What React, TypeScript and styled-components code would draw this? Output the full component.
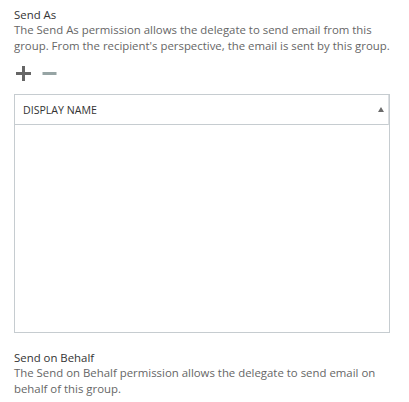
import styled, { createGlobalStyle } from 'styled-components'

const GlobalStyle = createGlobalStyle`
    body {
        margin: 0;
        background: #ffffff;
        font-family: "Open Sans", "Noto Sans", sans-serif;
    }
`

const Page = styled.div`
    padding: 7px 19px 0 14px;
    width: 409px;
    box-sizing: border-box;
`

const Section = styled.div`
    margin-bottom: 17px;
`

const Title = styled.div`
    font-size: 11.4px;
    line-height: 15px;
    color: #333333;
`

const Description = styled.div`
    font-size: 11.4px;
    line-height: 16px;
    color: #666666;
`

const Toolbar = styled.div`
    display: flex;
    align-items: center;
    gap: 11px;
    height: 15px;
    margin: 12px 0 13px 2px;
`

const ToolButton = styled.button<{ $disabled?: boolean }>`
    display: flex;
    align-items: center;
    justify-content: center;
    padding: 0;
    border: none;
    background: none;
    width: 15px;
    height: 15px;
    color: ${p => (p.$disabled ? '#96a4a4' : '#666666')};
    cursor: ${p => (p.$disabled ? 'default' : 'pointer')};
`

const Grid = styled.div`
    border: 1px solid #c6ccd0;
    height: 239px;
    box-sizing: border-box;
`

const HeaderRow = styled.div`
    display: flex;
    align-items: center;
    justify-content: space-between;
    height: 30px;
    box-sizing: border-box;
    padding: 0 4px 0 8px;
    border-bottom: 1px solid #c6ccd0;
    border-right: 1px solid #dcdfe2;
`

const HeaderCell = styled.span`
    font-size: 10.6px;
    color: #333333;
    text-transform: uppercase;
`

const SortArrow = styled.span`
    width: 0;
    height: 0;
    border-left: 3.5px solid transparent;
    border-right: 3.5px solid transparent;
    border-bottom: 5px solid #6b6b6b;
`

const Plus = () => (
    <svg width="15" height="15" viewBox="0 0 15 15">
        <rect x="6" y="0" width="3" height="15" fill="currentColor" />
        <rect x="0" y="6" width="15" height="3" fill="currentColor" />
    </svg>
)

const Minus = () => (
    <svg width="15" height="15" viewBox="0 0 15 15">
        <rect x="0.5" y="6" width="14" height="3" fill="currentColor" />
    </svg>
)

const App = () => {
    return (
        <Page>
            <GlobalStyle />
            <Section>
                <Title>Send As</Title>
                <Description>
                    The Send As permission allows the delegate to send email from this group. From the recipient's perspective, the email is sent by this group.
                </Description>
                <Toolbar>
                    <ToolButton aria-label="Add"><Plus /></ToolButton>
                    <ToolButton $disabled aria-label="Remove"><Minus /></ToolButton>
                </Toolbar>
                <Grid>
                    <HeaderRow>
                        <HeaderCell>Display Name</HeaderCell>
                        <SortArrow />
                    </HeaderRow>
                </Grid>
            </Section>
            <Section>
                <Title>Send on Behalf</Title>
                <Description>
                    The Send on Behalf permission allows the delegate to send email on behalf of this group.
                </Description>
            </Section>
        </Page>
    )
}

export default App
